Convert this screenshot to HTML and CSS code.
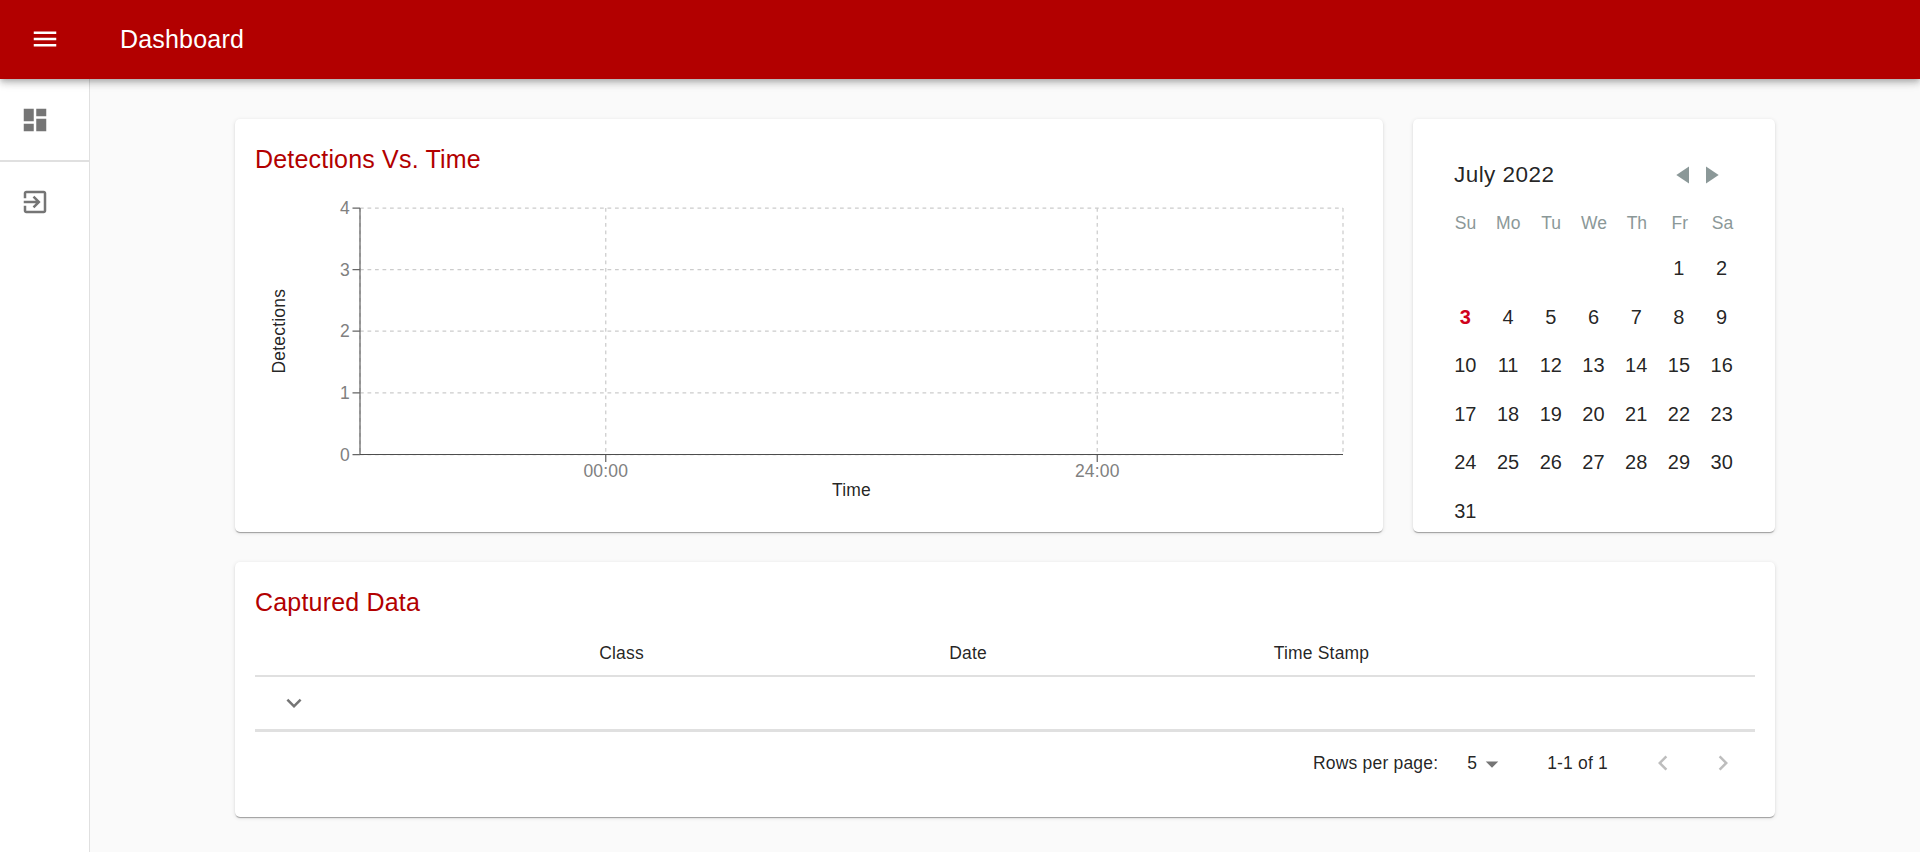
FILE: index.html
```html
<!DOCTYPE html>
<html lang="en">
<head>
<meta charset="utf-8">
<title>Dashboard</title>
<link rel="stylesheet" href="styles.css">
</head>
<body>
<header class="appbar">
  <svg class="icon" viewBox="0 0 24 24"><path d="M3 18h18v-2H3v2zm0-5h18v-2H3v2zm0-7v2h18V6H3z"/></svg>
  <h1 class="appbar-title">Dashboard</h1>
</header>
<div class="layout">
  <nav class="sidebar">
    <a class="nav-item nav-first"><svg class="icon" viewBox="0 0 24 24"><path d="M3 13h8V3H3v10zm0 8h8v-6H3v6zm10 0h8V11h-8v10zm0-18v6h8V3h-8z"/></svg></a>
    <a class="nav-item"><svg class="icon" viewBox="0 0 24 24"><path d="M10.09 15.59L11.5 17l5-5-5-5-1.41 1.41L12.67 11H3v2h9.67l-2.58 2.59zM19 3H5c-1.11 0-2 .9-2 2v4h2V5h14v14H5v-4H3v4c0 1.1.89 2 2 2h14c1.1 0 2-.9 2-2V5c0-1.1-.9-2-2-2z"/></svg></a>
  </nav>
  <main class="content">
    <div class="top-row">
      <section class="card chart-card">
        <h2 class="card-title">Detections Vs. Time</h2>
        <svg class="chart" width="1108" height="323" viewBox="0 0 1108 323">
          <g class="grid">
            <path d="M105 20H1088M105 81.6H1088M105 143.2H1088M105 204.9H1088M105 266.5H1088"/>
            <path d="M350.75 20V266.5M842.25 20V266.5M1088 20V266.5M105 20V266.5"/>
          </g>
          <path class="axis" d="M105 20V266.5M97.5 20H105M97.5 81.6H105M97.5 143.2H105M97.5 204.9H105M97.5 266.5H105M350.75 266.5V274M842.25 266.5V274"/>
          <path class="axis axis-x" d="M105 266.5H1088"/>
          <g class="tick-y">
            <text x="95" y="26">4</text>
            <text x="95" y="87.6">3</text>
            <text x="95" y="149.2">2</text>
            <text x="95" y="210.9">1</text>
            <text x="95" y="272.5">0</text>
          </g>
          <g class="tick-x">
            <text x="350.75" y="289">00:00</text>
            <text x="842.25" y="289">24:00</text>
          </g>
          <text class="axis-label" x="596.5" y="308">Time</text>
          <text class="axis-label" transform="translate(30 143.2) rotate(-90)">Detections</text>
        </svg>
      </section>
      <section class="card calendar">
        <div class="cal-head">
          <span>July 2022</span>
          <span class="cal-nav">
            <svg width="13" height="18" viewBox="0 0 13 18"><path d="M13 0.5V17.5L0.3 9z"/></svg>
            <svg width="13" height="18" viewBox="0 0 13 18"><path d="M0 0.5V17.5L12.7 9z"/></svg>
          </span>
        </div>
        <div class="cal-row weekdays"><span>Su</span><span>Mo</span><span>Tu</span><span>We</span><span>Th</span><span>Fr</span><span>Sa</span></div>
        <div class="cal-row days">
          <span></span><span></span><span></span><span></span><span></span><span>1</span><span>2</span>
          <span class="today">3</span><span>4</span><span>5</span><span>6</span><span>7</span><span>8</span><span>9</span>
          <span>10</span><span>11</span><span>12</span><span>13</span><span>14</span><span>15</span><span>16</span>
          <span>17</span><span>18</span><span>19</span><span>20</span><span>21</span><span>22</span><span>23</span>
          <span>24</span><span>25</span><span>26</span><span>27</span><span>28</span><span>29</span><span>30</span>
          <span>31</span>
        </div>
      </section>
    </div>
    <section class="card data-card">
      <h2 class="card-title">Captured Data</h2>
      <div class="table-row table-head"><span></span><span>Class</span><span>Date</span><span>Time Stamp</span><span></span></div>
      <div class="table-row table-body">
        <span class="expand"><svg class="icon" viewBox="0 0 24 24"><path d="M7.41 8.59L12 13.17l4.59-4.58L18 10l-6 6-6-6 1.41-1.41z"/></svg></span>
      </div>
      <div class="pagination">
        <span class="rows-label">Rows per page:</span>
        <span class="rows-select">5<svg class="icon" viewBox="0 0 24 24"><path d="M7 10l5 5 5-5z"/></svg></span>
        <span class="range">1-1 of 1</span>
        <svg class="icon pager" viewBox="0 0 24 24"><path d="M15.41 7.41L14 6l-6 6 6 6 1.41-1.41L10.83 12z"/></svg>
        <svg class="icon pager" viewBox="0 0 24 24"><path d="M10 6L8.59 7.41 13.17 12l-4.58 4.59L10 18l6-6z"/></svg>
      </div>
    </section>
  </main>
</div>
</body>
</html>
```
FILE: styles.css
```css
* { box-sizing: border-box; }
body {
  margin: 0;
  height: 852px;
  overflow: hidden;
  display: flex;
  flex-direction: column;
  background: #fafafa;
  color: rgba(0, 0, 0, .87);
  font: 17.5px/1.43 "Liberation Sans", Arial, sans-serif;
  letter-spacing: .01071em;
}
h1, h2 { margin: 0; font-weight: 400; font-size: 25px; line-height: 40px; letter-spacing: .0075em; }
svg { display: block; flex: none; }
.icon { width: 30px; height: 30px; fill: currentColor; }

.appbar {
  flex: none;
  height: 79px;
  padding: 0 0 1px 30px;
  display: flex;
  align-items: center;
  gap: 60px;
  color: #fff;
  background: #b20000;
  z-index: 1;
  box-shadow: 0 2.5px 5px -1.25px rgba(0, 0, 0, .2), 0 5px 6.25px rgba(0, 0, 0, .14), 0 1.25px 12.5px rgba(0, 0, 0, .12);
}
.layout { flex: 1; display: flex; min-height: 0; }
.sidebar { width: 90px; flex: none; background: #fff; border-right: 1px solid #e0e0e0; color: #757575; }
.nav-item { display: flex; align-items: center; height: 80px; padding-left: 20px; }
.nav-first { height: 83px; border-bottom: 2px solid #e0e0e0; }
.content { flex: 1; padding: 40px 145px 0; display: flex; flex-direction: column; gap: 30px; }
.top-row { display: flex; gap: 30px; height: 413px; }
.card {
  background: #fff;
  border-radius: 5px;
  box-shadow: 0 2px 1px -1px rgba(0, 0, 0, .2), 0 1px 1px rgba(0, 0, 0, .14), 0 1px 4px rgba(0, 0, 0, .12);
}
.card-title { color: #b20000; }
.chart-card { width: 1148px; padding: 20px; }
.chart { margin-top: 9px; font-size: 17.5px; }
.grid path { fill: none; stroke: #ccc; stroke-width: 1.25; stroke-dasharray: 3.75 3.75; }
.axis { fill: none; stroke: #666; stroke-width: 1.25; }
.axis-x { stroke: #4d4d4d; stroke-width: 1; }
.tick-y { text-anchor: end; fill: #808080; }
.tick-x { text-anchor: middle; fill: #808080; }
.axis-label { text-anchor: middle; fill: rgba(0, 0, 0, .87); }

.calendar { flex: 1; padding: 41px 31px 0; overflow: hidden; }
.cal-head { display: flex; justify-content: space-between; align-items: center; height: 30px; padding: 0 25px 0 10px; font-size: 22.5px; letter-spacing: .02em; }
.cal-nav { display: flex; gap: 17px; fill: #8b9898; }
.cal-nav svg { margin-top: -1px; }
.cal-row { display: grid; grid-template-columns: repeat(7, 1fr); text-align: center; }
.weekdays { margin-top: 19px; line-height: 28px; color: #8b9898; letter-spacing: 0; }
.days { margin: 7px 1px 0 0; grid-auto-rows: 48.6px; line-height: 48.6px; font-size: 20px; letter-spacing: 0; }
.today { color: #d0021b; font-weight: 700; }

.data-card { height: 255px; padding: 20px; }
.table-row { display: grid; align-items: center; grid-template-columns: 194.5px 344px 349px 358px 254.5px; text-align: center; }
.table-head { height: 55px; padding-top: 10px; border-bottom: 2px solid #e0e0e0; }
.table-body { height: 55px; border-bottom: 3px solid #e0e0e0; color: #757575; }
.expand { padding-left: 24px; }
.pagination { display: flex; align-items: center; height: 62px; padding-right: 17px; justify-content: flex-end; }
.rows-label, .range { padding-top: 2px; }
.rows-select { display: flex; align-items: center; margin-left: 30px; padding-top: 2px; }
.rows-select .icon { color: #757575; }
.range { margin: 0 40px; }
.rows-label { margin-right: -1px; }
.pager { color: #bdbdbd; }
.pager + .pager { margin-left: 30px; }
```
